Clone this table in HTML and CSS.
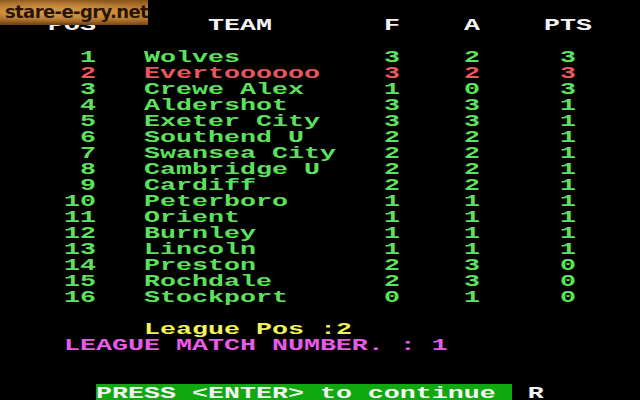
FILE: index.html
```html
<!DOCTYPE html>
<html>
<head>
<meta charset="utf-8">
<link rel="stylesheet" href="styles.css">
</head>
<body>
<div class="page">
  <div class="screen">
    <div class="row head">
      <span class="pos">POS</span><span></span><span class="team">TEAM</span><span>F</span><span></span><span>A</span><span></span><span class="pts">PTS</span>
    </div>
    <div class="table">
      <div class="row green"><span class="pos">1</span><span></span><span>Wolves</span><span>3</span><span></span><span>2</span><span></span><span class="pts">3</span></div>
      <div class="row red"><span class="pos">2</span><span></span><span>Evertoooooo</span><span>3</span><span></span><span>2</span><span></span><span class="pts">3</span></div>
      <div class="row green"><span class="pos">3</span><span></span><span>Crewe Alex</span><span>1</span><span></span><span>0</span><span></span><span class="pts">3</span></div>
      <div class="row green"><span class="pos">4</span><span></span><span>Aldershot</span><span>3</span><span></span><span>3</span><span></span><span class="pts">1</span></div>
      <div class="row green"><span class="pos">5</span><span></span><span>Exeter City</span><span>3</span><span></span><span>3</span><span></span><span class="pts">1</span></div>
      <div class="row green"><span class="pos">6</span><span></span><span>Southend U</span><span>2</span><span></span><span>2</span><span></span><span class="pts">1</span></div>
      <div class="row green"><span class="pos">7</span><span></span><span>Swansea City</span><span>2</span><span></span><span>2</span><span></span><span class="pts">1</span></div>
      <div class="row green"><span class="pos">8</span><span></span><span>Cambridge U</span><span>2</span><span></span><span>2</span><span></span><span class="pts">1</span></div>
      <div class="row green"><span class="pos">9</span><span></span><span>Cardiff</span><span>2</span><span></span><span>2</span><span></span><span class="pts">1</span></div>
      <div class="row green"><span class="pos">10</span><span></span><span>Peterboro</span><span>1</span><span></span><span>1</span><span></span><span class="pts">1</span></div>
      <div class="row green"><span class="pos">11</span><span></span><span>Orient</span><span>1</span><span></span><span>1</span><span></span><span class="pts">1</span></div>
      <div class="row green"><span class="pos">12</span><span></span><span>Burnley</span><span>1</span><span></span><span>1</span><span></span><span class="pts">1</span></div>
      <div class="row green"><span class="pos">13</span><span></span><span>Lincoln</span><span>1</span><span></span><span>1</span><span></span><span class="pts">1</span></div>
      <div class="row green"><span class="pos">14</span><span></span><span>Preston</span><span>2</span><span></span><span>3</span><span></span><span class="pts">0</span></div>
      <div class="row green"><span class="pos">15</span><span></span><span>Rochdale</span><span>2</span><span></span><span>3</span><span></span><span class="pts">0</span></div>
      <div class="row green"><span class="pos">16</span><span></span><span>Stockport</span><span>0</span><span></span><span>1</span><span></span><span class="pts">0</span></div>
    </div>
    <div class="line league-pos">League Pos :2</div>
    <div class="line match">LEAGUE MATCH NUMBER. : 1</div>
    <div class="line press"><span class="bar">PRESS &lt;ENTER&gt; to continue </span><span class="key">R</span></div>
  </div>
  <div class="watermark"><span class="wm-text">stare-e-gry.net</span></div>
</div>
</body>
</html>
```
FILE: styles.css
```css
html, body {
  margin: 0;
  padding: 0;
  background: #000;
}
body {
  width: 640px;
  height: 400px;
  overflow: hidden;
}
.page {
  position: relative;
  width: 640px;
  height: 400px;
  overflow: hidden;
}
.screen {
  width: 400px;
  height: 400px;
  transform: scaleX(1.6);
  transform-origin: 0 0;
  font-family: "Liberation Mono", monospace;
  font-weight: bold;
  font-size: 16.667px;
  white-space: pre;
  display: flex;
  flex-direction: column;
}
.row, .line {
  height: 14px;
  padding-top: 2px;
  line-height: 16px;
}
.row {
  display: grid;
  grid-template-columns: 60px 30px 150px 10px 40px 10px 40px 30px;
}
.pos { text-align: right; }
.pts { text-align: center; }
.head {
  margin-top: 16px;
  color: #f4f4f4;
}
.head .team { padding-left: 40px; }
.table {
  margin-top: 16px;
  display: flex;
  flex-direction: column;
}
.green { color: #5ee05e; }
.red { color: #e85858; }
.league-pos {
  margin-top: 16px;
  padding-left: 90px;
  color: #f2f25a;
}
.match {
  padding-left: 40px;
  color: #e85ae8;
}
.press {
  margin-top: 32px;
  padding-left: 60px;
  display: flex;
  height: 16px;
  padding-top: 0;
}
.bar {
  background: #10a810;
  color: #f4f4f4;
  height: 16px;
  padding-top: 2px;
  box-sizing: border-box;
  line-height: 16px;
}
.key {
  margin-left: 10px;
  color: #f4f4f4;
  padding-top: 2px;
  line-height: 16px;
}
.watermark {
  position: absolute;
  left: 0;
  top: 0;
  width: 148px;
  height: 25px;
  box-sizing: border-box;
  padding-left: 5px;
  background:
    radial-gradient(ellipse at 30% 45%, #d89a48, rgba(0,0,0,0) 65%),
    radial-gradient(ellipse at 80% 55%, #c88838, rgba(0,0,0,0) 60%),
    linear-gradient(180deg, #8a561c 0%, #c08032 45%, #a86c26 70%, #6e4214 100%);
  line-height: 24px;
}
.wm-text {
  font-family: "DejaVu Sans", sans-serif;
  font-weight: bold;
  font-size: 18px;
  letter-spacing: -0.6px;
  color: #2a1404;
}
```
